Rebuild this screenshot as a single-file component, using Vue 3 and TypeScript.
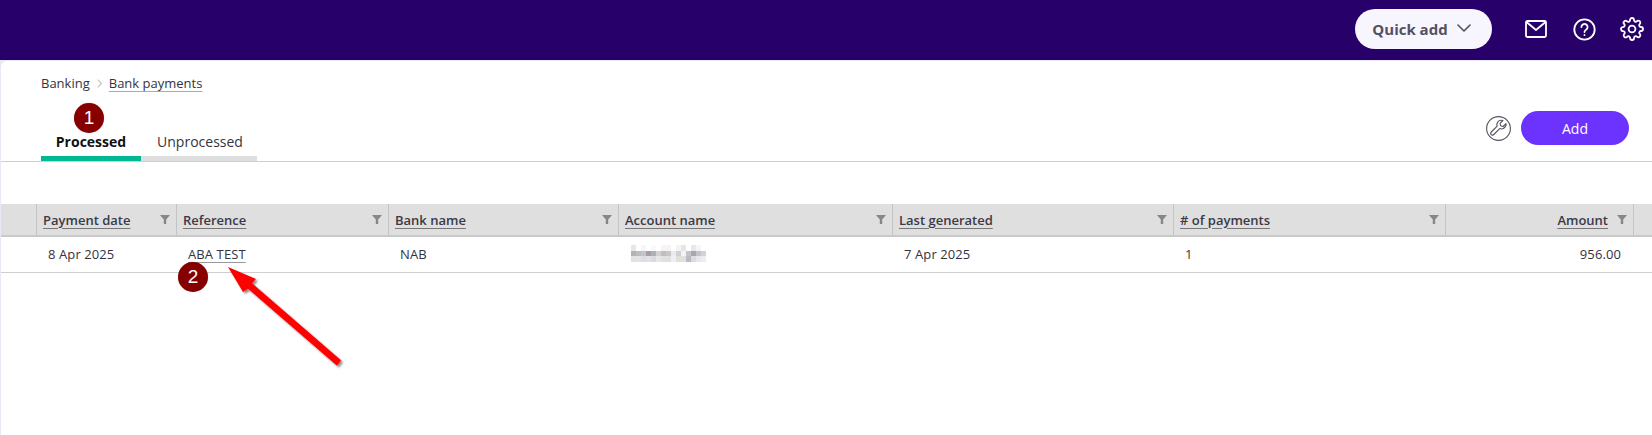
<script setup lang="ts">
interface Col { label: string; value: string; right?: boolean; link?: boolean; blur?: boolean }
const cols: Col[] = [
  { label: 'Payment date', value: '8 Apr 2025' },
  { label: 'Reference', value: 'ABA TEST', link: true },
  { label: 'Bank name', value: 'NAB' },
  { label: 'Account name', value: '', blur: true },
  { label: 'Last generated', value: '7 Apr 2025' },
  { label: '# of payments', value: '1' },
  { label: 'Amount', value: '956.00', right: true },
]
const mosaic: string[] = [
  '#e6e6e8','#ffffff','#f6f6f6','#ffffff','#f8f9fb','#ffffff','#faf3f0','#f8f4f4','#ffffff','#f6f2ee','#e4e6ea','#ffffff','#e8e8e4','#f2f6f8','#ffffff',
  '#b9b1b0','#bdbdbf','#c4c4c6','#a59ea4','#a9b1b9','#d3d3d5','#c0bfbd','#c8c7c6','#e8ebf0','#ced0d4','#f4f4f6','#c2c4c8','#aaa6ae','#c2c4c6','#d0d4da',
  '#e6e0de','#e4e2e2','#dcdee0','#e2e2e4','#d8dce0','#e6e6e8','#e2e0e0','#e2e0de','#eeeff2','#e2dfd8','#e2e0dc','#bcb8c4','#dcdcde','#e4eaea','#eeeef0',
]
</script>

<template>
  <div class="page">
    <header class="topbar">
      <button class="quick">Quick add
        <svg class="chev" viewBox="0 0 14 8" width="14" height="8"><path d="M1 1l6 6 6-6" fill="none" stroke="#55505f" stroke-width="1.6" stroke-linecap="round" stroke-linejoin="round"/></svg>
      </button>
      <svg class="ico mail" width="22" height="18" viewBox="0 0 22 18" fill="none" stroke="#fff" stroke-width="1.8" stroke-linejoin="round">
        <rect x="1" y="1" width="20" height="16" rx="1.5"/><path d="M1.5 2l9.5 8 9.5-8"/>
      </svg>
      <svg class="ico help" width="23" height="23" viewBox="0 0 23 23" fill="none" stroke="#fff" stroke-width="1.8" stroke-linecap="round">
        <circle cx="11.5" cy="11.5" r="10.2"/>
        <path d="M8.4 9a3.1 3.1 0 1 1 4.7 2.7c-1 .6-1.6 1.1-1.6 2.3"/>
        <path d="M11.5 17v.2"/>
      </svg>
      <svg class="ico gear" width="24" height="24" viewBox="0 0 24 24" fill="none" stroke="#fff" stroke-width="1.8" stroke-linecap="round" stroke-linejoin="round">
        <circle cx="12" cy="12" r="3.4"/>
        <path d="M19.4 15a1.65 1.65 0 0 0 .33 1.82l.06.06a2 2 0 1 1-2.83 2.83l-.06-.06a1.65 1.65 0 0 0-1.82-.33 1.65 1.65 0 0 0-1 1.51V21a2 2 0 0 1-4 0v-.09A1.65 1.65 0 0 0 9 19.4a1.65 1.65 0 0 0-1.82.33l-.06.06a2 2 0 1 1-2.83-2.83l.06-.06a1.65 1.65 0 0 0 .33-1.82 1.65 1.65 0 0 0-1.51-1H3a2 2 0 0 1 0-4h.09A1.65 1.65 0 0 0 4.6 9a1.65 1.65 0 0 0-.33-1.82l-.06-.06a2 2 0 1 1 2.83-2.83l.06.06a1.65 1.65 0 0 0 1.82.33H9a1.65 1.65 0 0 0 1-1.51V3a2 2 0 0 1 4 0v.09a1.65 1.65 0 0 0 1 1.51 1.65 1.65 0 0 0 1.82-.33l.06-.06a2 2 0 1 1 2.83 2.83l-.06.06a1.65 1.65 0 0 0-.33 1.82V9a1.65 1.65 0 0 0 1.51 1H21a2 2 0 0 1 0 4h-.09a1.65 1.65 0 0 0-1.51 1z"/>
      </svg>
    </header>

    <main class="content">
      <nav class="crumbs">
        <span>Banking</span>
        <svg width="5" height="9" viewBox="0 0 5 9"><path d="M.7.7l3.6 3.8L.7 8.3" fill="none" stroke="#c8c8c8" stroke-width="1.2"/></svg>
        <a>Bank payments</a>
      </nav>

      <div class="toolbar">
        <div class="tabs">
          <div class="tab active">Processed<span class="badge one">1</span></div>
          <div class="tab second">Unprocessed</div>
        </div>
        <div class="actions">
          <svg width="25" height="25" viewBox="0 0 25 25" fill="none" stroke="#55505f" stroke-width="1.1" stroke-linejoin="round">
            <circle cx="12.5" cy="12.5" r="11.9"/>
            <path d="M20 7.6l-2.9 2.9-2.4-.7-.7-2.4L16.9 4.5c-1.9-.6-4-.1-5.1 1.3-1 1.2-1.2 2.9-.6 4.3l-5.9 5.9c-.8.8-.8 1.9-.1 2.6.7.7 1.8.7 2.6-.1l5.9-5.9c1.4.6 3.1.4 4.3-.6 1.4-1.1 2.6-2.4 2-4.4z"/>
          </svg>
          <button class="add">Add</button>
        </div>
      </div>

      <section class="table">
        <div class="row head">
          <div class="cell spacer"></div>
          <div v-for="c in cols" :key="c.label" class="cell th" :class="{ right: c.right }">
            <span class="label">{{ c.label }}</span>
            <svg class="filter" width="10" height="9" viewBox="0 0 10 9"><path d="M0 0h10L6.2 4.4V9H3.8V4.4z" fill="#85878c"/></svg>
          </div>
          <div class="cell"></div>
        </div>
        <div class="row body">
          <div class="cell spacer"></div>
          <div v-for="c in cols" :key="c.label" class="cell td" :class="{ right: c.right }">
            <a v-if="c.link" class="ref">{{ c.value }}<span class="badge two">2</span></a>
            <div v-else-if="c.blur" class="mosaic">
              <i v-for="(m, i) in mosaic" :key="i" :style="{ background: m }"></i>
            </div>
            <template v-else>{{ c.value }}</template>
          </div>
          <div class="cell"></div>
        </div>
      </section>
    </main>

    <svg class="arrow" width="130" height="110" viewBox="220 260 130 110">
      <defs>
        <filter id="sh" x="-10%" y="-10%" width="125%" height="125%">
          <feDropShadow dx="2" dy="2" stdDeviation="1.2" flood-color="#000" flood-opacity=".45"/>
        </filter>
      </defs>
      <path d="M228 267L256 279L252 283.3L341 360.3L337 365.7L248 288.7L243 292z" fill="#ff0000" filter="url(#sh)"/>
    </svg>
  </div>
</template>

<style>
html, body { margin: 0; background: #fff; }
</style>

<style scoped>
.page {
  position: relative;
  width: 1652px;
  height: 435px;
  overflow: hidden;
  font-family: "Open Sans", "Noto Sans", sans-serif;
  font-size: 13px;
  color: #33333f;
  background: #e9e8f4;
}
.topbar {
  height: 60px;
  box-sizing: border-box;
  background: #27006a;
  display: flex;
  align-items: center;
  padding: 0 8px 2px 1355px;
}
.quick {
  width: 141px;
  height: 40px;
  border: 0;
  border-radius: 20px;
  background: #f7f6ff;
  color: #55505f;
  font: 700 15px "Open Sans", sans-serif;
  display: flex;
  align-items: center;
  justify-content: center;
  gap: 9px;
  padding: 0 4px 0 0;
}
.chev { margin-top: -3px; }
.ico { flex: none; }
.mail { margin-left: 33px; }
.help { margin-left: 26px; }
.gear { margin-left: 24px; }
.content {
  height: 374px;
  margin: 1px 0 0 1px;
  background: #fff;
  border-radius: 6px 0 0 0;
}
.crumbs {
  display: flex;
  align-items: center;
  gap: 7px;
  padding: 13px 0 0 40px;
  height: 18px;
  line-height: 18px;
}
.crumbs a { text-decoration: underline; text-decoration-color: #aaa; text-underline-offset: 3px; }
.toolbar {
  height: 70px;
  box-sizing: border-box;
  border-bottom: 1px solid #cfcfcf;
  display: flex;
  justify-content: space-between;
  align-items: flex-end;
  padding-left: 40px;
}
.tabs { display: flex; }
.tab {
  position: relative;
  box-sizing: border-box;
  width: 116px;
  height: 29px;
  border-bottom: 5px solid #dedede;
  text-align: center;
  font-size: 14px;
  line-height: 20px;
}
.tab.second { padding-left: 2px; }
.tab.active {
  width: 100px;
  border-bottom-color: #00b894;
  font-weight: 700;
  color: #111;
}
.badge {
  position: absolute;
  width: 30px;
  height: 30px;
  border-radius: 50%;
  background: #860000;
  color: #fff;
  font: 400 19px/30px "Liberation Sans", sans-serif;
  text-align: center;
  text-decoration: none;
  display: block;
  box-shadow: 0 0 1px rgba(0,0,0,.35);
}
.badge.one { left: 33px; top: -29px; }
.badge.two { left: -10px; top: 17px; }
.actions {
  display: flex;
  align-items: center;
  gap: 10px;
  padding: 0 23px 16px 0;
}
.add {
  width: 108px;
  height: 34px;
  border: 0;
  border-radius: 17px;
  background: #6c33ff;
  color: #fff;
  font: 400 14px "Open Sans", sans-serif;
  padding: 0;
}
.table { margin: 42px 0 0 -1px; }
.row {
  display: grid;
}
.head {
  height: 33px;
  box-sizing: border-box;
  background: #dfdfdf;
  border-bottom: 2px solid #c9c9c9;
  margin-left: 1px;
  grid-template-columns: 35px 140px 212px 230px 274px 281px 272px 188px 19px;
}
.th {
  box-sizing: border-box;
  border-left: 1.5px solid #c4c4c4;
  display: flex;
  align-items: center;
  padding: 0 6px;
  font-weight: 600;
  color: #3a3a46;
}
.head > .cell:last-child { border-left: 1.5px solid #c4c4c4; }
.label {
  text-decoration: underline;
  text-decoration-color: #777;
  text-underline-offset: 3px;
}
.filter { margin-left: auto; margin-top: 0; }
.th.right { justify-content: flex-end; }
.th.right .filter { margin-left: 9px; }
.body {
  height: 36px;
  margin-left: 1px;
  grid-template-columns: 35px 140px 212px 230px 274px 281px 272px 188px 19px;
  border-bottom: 1px solid #cfcfcf;
  box-sizing: border-box;
}
.td {
  display: flex;
  align-items: center;
  padding: 0 12px 2px;
  color: #33333f;
  letter-spacing: .1px;
}
.td.right { justify-content: flex-end; }
.ref {
  position: relative;
  text-decoration: underline;
  text-decoration-color: #999;
  text-underline-offset: 3px;
}
.mosaic {
  display: grid;
  grid-template-columns: repeat(15, 5px);
  grid-auto-rows: 5.5px;
  margin-left: 1px;
}
.mosaic i { display: block; }
.arrow {
  position: absolute;
  left: 220px;
  top: 260px;
  pointer-events: none;
}
</style>
